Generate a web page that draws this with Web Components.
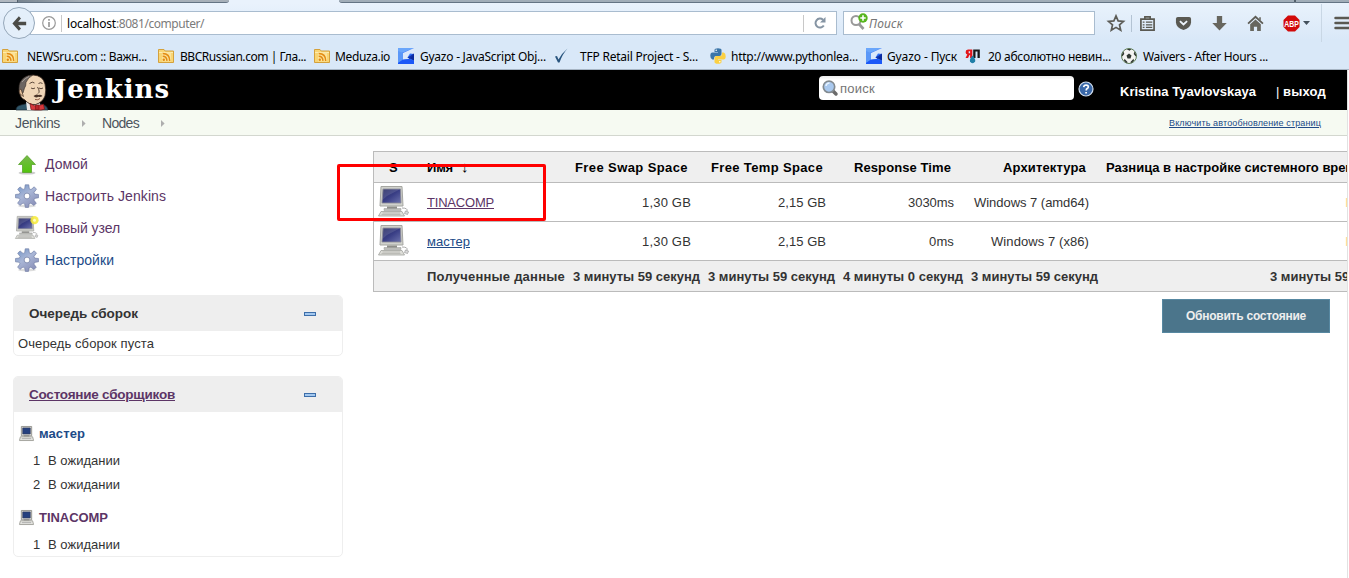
<!DOCTYPE html>
<html lang="ru">
<head>
<meta charset="utf-8">
<title>Nodes [Jenkins]</title>
<style>
html,body{margin:0;height:100%;overflow:hidden;background:#fff}
body{font-family:"Liberation Sans",Arial,sans-serif;font-size:13px;color:#333}
</style>
</head>
<body>
<jenkins-screen></jenkins-screen>
<script>
const define = (name, css, html, ready) => {
  customElements.define(name, class extends HTMLElement {
    constructor() {
      super();
      const t = document.createElement('template');
      t.innerHTML = `<style>:host{display:block;box-sizing:border-box}*{box-sizing:border-box}${css}</style>${typeof html === 'function' ? '' : html}`;
      this.attachShadow({mode: 'open'}).appendChild(t.content.cloneNode(true));
    }
    connectedCallback() {
      if (typeof html === 'function' && !this.done) {
        this.done = true;
        this.shadowRoot.innerHTML += html(this);
      }
      if (ready) ready(this);
    }
  });
};

/* Text run tracked so that it takes exactly `w` pixels */
define('fit-text', ':host{display:inline-block;white-space:pre;vertical-align:baseline}', '<slot></slot>', el => {
  const w = parseFloat(el.getAttribute('w'));
  const n = el.textContent.length;
  el.style.letterSpacing = '0px';
  const own = el.getBoundingClientRect().width;
  const ls = (w - own) / Math.max(1, n);
  el.style.letterSpacing = ls.toFixed(4) + 'px';
});

const pc = `<linearGradient id="s" x1="0" y1="0" x2="1" y2="1"><stop offset="0" stop-color="#24285e"/><stop offset=".5" stop-color="#3a3f86"/><stop offset="1" stop-color="#6d73ad"/></linearGradient>
<path d="M3 .5h21l1 19.500H2z" fill="#d0d1cc" stroke="#a5a6a1"/><path d="M5 3h17.500l.5 14H4z" fill="url(#s)" stroke="#8b8c96" stroke-width=".8"/><path d="M5 3h17.500L9 10l-4.500 4z" fill="#fff" opacity=".12"/>
<path d="M9 20.500h10v3H9z" fill="#8e8f89"/><path d="M6 22.500h17v2H6z" fill="#bcbdb8" stroke="#999" stroke-width=".5"/>
<path d="M3 25.500h21l2.500 4.500H.5z" fill="#deded9" stroke="#a0a19c" stroke-width=".8"/><path d="M4.500 27h17.500M3.500 28.600h19" stroke="#aeafa9" stroke-width=".8"/><path d="M24 22q6 0 5 3" fill="none" stroke="#aaa"/><path d="M27.500 25l3 1-1 2.500-3-1z" fill="#ddd" stroke="#999" stroke-width=".7"/>`;
const icons = {
  back: ['0 0 18 16', '<path d="M9.500 1.500L3 8l6.500 6.500M4 8h13" fill="none" stroke="#4c4c47" stroke-width="3.600"/>'],
  info: ['0 0 16 16', '<circle cx="8" cy="8" r="6.300" fill="none" stroke="#999" stroke-width="1.200"/><path d="M8 7v5M8 4v1.700" stroke="#999" stroke-width="1.700"/>'],
  reload: ['0 0 14 14', '<path d="M10.800 9.500A4.500 4.500 0 1 1 10 3.700" fill="none" stroke="#8594a3" stroke-width="2"/><path d="M12.500 1v5.500H7z" fill="#8594a3"/>'],
  addsearch: ['0 0 20 18', '<circle cx="7" cy="7.500" r="4.500" fill="none" stroke="#999" stroke-width="2"/><path d="M10 11l4.500 5" stroke="#999" stroke-width="2.700"/><circle cx="14" cy="5" r="4.700" fill="#57b51d"/><path d="M14 2.300v5.400M11.300 5h5.400" stroke="#fff" stroke-width="1.600"/>'],
  star: ['0 0 16 16', '<path d="M8 1.700l1.900 4.400 4.800.4-3.600 3.200 1.100 4.700L8 11.900l-4.200 2.500 1.100-4.700L1.300 6.500l4.800-.4z" fill="none" stroke="#5c5c57" stroke-width="1.500"/>'],
  list: ['0 0 16 16', '<path d="M1.800 3.800h12.400v10.400H1.800z" fill="none" stroke="#5a5952" stroke-width="1.600"/><path d="M5.500 4V1.800h5V4" fill="none" stroke="#5a5952" stroke-width="1.500"/><path d="M3.500 6.800h1.700M6.500 6.800h6M3.500 9.200h1.700M6.500 9.200h6M3.500 11.600h1.700M6.500 11.600h6" stroke="#5a5952" stroke-width="1.200"/>'],
  pocket: ['0 0 18 16', '<path d="M1 3q0-2 2-2h12q2 0 2 2v4q-.5 6-8 8-7.500-2-8-8z" fill="#5a5952"/><path d="M5.200 5.500L9 9l3.800-3.500" fill="none" stroke="#edf4fb" stroke-width="2"/>'],
  down: ['0 0 16 16', '<path d="M5.500 1h5v6.500h4.300L8 14.700 1.200 7.500h4.300z" fill="#67665e"/>'],
  home: ['0 0 16 16', '<path d="M1 8.200L8 1.700l7 6.500" fill="none" stroke="#5d5c55" stroke-width="1.700"/><path d="M3 8.800l5-4.600 5 4.600V15H9.500v-4h-3v4H3zM11.500 2H13v3l-1.500-1z" fill="#67665e"/>'],
  abp: ['0 0 17 17', '<path d="M5 .5h7L16.500 5v7L12 16.500H5L.5 12V5z" fill="#d20a0a"/><text x="8.500" y="11.600" text-anchor="middle" textLength="14.500" lengthAdjust="spacingAndGlyphs" font-family="Liberation Sans" font-weight="bold" font-size="8.500" fill="#fff">ABP</text>'],
  menu: ['0 0 18 14', '<path d="M1.500 2h16M1.500 7h16M1.500 12h16" stroke="#5a5952" stroke-width="2.500" stroke-linecap="round"/>'],
  rss: ['0 0 16 16', '<path d="M.5 3V1.500h5.500l1.200 1.500h8.300v11.500H.5z" fill="#f9d573" stroke="#d4a13c"/><path d="M1 4.500h14" stroke="#fdebb0"/><rect x="4" y="4.500" width="9" height="9" fill="#fbe39a"/><circle cx="5.800" cy="11.800" r="1.200" fill="#e38b13"/><path d="M4.700 8.200q4 0 4.300 4.700M4.700 5.500q7 0 7 7.400" fill="none" stroke="#e38b13" stroke-width="1.500"/>'],
  gyazo: ['0 0 16 16', '<path d="M0 0h16v16H0z" fill="#2f6ff6"/><path d="M0 0h16L5 4.500 0 6z" fill="#6aa6fb"/><path d="M0 3l5 2v7l-5 3z" fill="#5a97f8"/><path d="M16 0v6l-4-.5-2.500 4L12 11l-7 1V5z" fill="#dbe8fa"/><path d="M16 5.500v7L11 10z" fill="#0b2a9e"/><path d="M0 15l5-3.500 6-.5 5 2v3H0z" fill="#1b58f8"/><path d="M9.500 9.500l6.500-4L12 11z" fill="#1234ae"/>'],
  check: ['0 0 16 16', '<path d="M2 8.500l2-.5 1.500 3.500Q9 5 14.500.5 9.500 6 6.500 14.500H5z" fill="#29557e"/>'],
  python: ['0 0 16 16', '<path d="M4.500 2q0-1.800 3.500-1.800T11.500 2v4q0 2-2 2H6Q4 8 4 10.500v1H2.300Q.3 11 .3 7.800T2.500 4.500H8V4H4.500z" fill="#3c76a9"/><path d="M11.500 14q0 1.800-3.500 1.800T4.500 14v-4q0-2 2-2H10q2 0 2-2.500v-1h1.700q2 .5 2 3.700t-2.200 3.300H8v.5h3.500z" fill="#fbd043"/><circle cx="6.200" cy="2.200" r=".8" fill="#fff"/><circle cx="9.800" cy="13.800" r=".8" fill="#fff"/>'],
  yap: ['0 0 16 16', '<path d="M7.300 1.500H3Q.6 1.700.6 4.200q0 1.800 1.700 2.300L.5 10H3l1.500-3h.6v3h2.200zM5.100 5.200H3.700V3.300h1.400z" fill="#e3161b" fill-rule="evenodd"/><path d="M8.200 1.500h6.600V10h-2.300V3.500h-2V10H8.200z" fill="#181818"/><path d="M7.500 7.500q3.500 3.800 2.600 6-1 1.700-2.600 1.700T5 13.500q-.8-2.200 2.500-6z" fill="#207fa8"/>'],
  ball: ['0 0 16 16', '<circle cx="8" cy="8" r="7.500" fill="#f4f4f2" stroke="#5e7d57"/><path d="M8 5.500l2.500 1.900-1 3h-3l-1-3zM5.500 1h5L8.500 2.800zM.7 7l1.800-3.500.8 2.500-2 2.500zM15.300 7l-1.800-3.500-.8 2.500 2 2.500zM3 12.800l.5-2L6.500 14l-.5 1.300zM13 12.800l-.5-2L9.500 14l.5 1.300z" fill="#303832"/>'],
  logo: ['0 0 34 36', '<path d="M1 36q0-4 5-5l8-2 12 1q6 1 7 6z" fill="#2f5568" stroke="#1a2833" stroke-width=".7"/><path d="M11 27l6 5 8-3v7H12z" fill="#e8e8e8"/><path d="M6 10Q9 1 18 1q10 .5 12 9 1.500 6 0 12-2.500 6.500-9.500 8.500Q14 31 10 26q-5-2-5.500-8z" fill="#f0d6b7" stroke="#3b2a20" stroke-width=".8"/><path d="M4.500 20Q2.500 10 7 5.500 11 1.200 17.500 1.300 13 3.500 11 8.500q0 4-1.500 5.500l-1.500 5z" fill="#6c6561" stroke="#312722" stroke-width=".6"/><path d="M7 8q3-4 7-5.500" fill="none" stroke="#a39c97" stroke-width="1"/><path d="M6 15q-3 1-1 5l3.500 2.500z" fill="#e4bf99" stroke="#4b3628" stroke-width=".7"/><path d="M14.500 9.500q3-2.500 5-.5M23.500 9.500q2-1.500 4 0M16 14q2 1.500 4 0M24 14q2 1.500 4 0M22.500 13q3 5 .5 6.500" fill="none" stroke="#4b382b" stroke-width=".9"/><path d="M18.500 22q3-2.500 5-1 2-1 4 1-2 1.500-4 .8-3 1.500-5-.8z" fill="#4a3428"/><path d="M20 25.500q3 1 5-1" fill="none" stroke="#753f2c" stroke-width=".8"/><path d="M15 29.500l5.500 2.700 8-2 1 5-3.500.8h-6l-4-.5z" fill="#d8383c" stroke="#711" stroke-width=".7"/><rect x="20.500" y="31" width="3.500" height="4.500" fill="#b9252a" stroke="#711" stroke-width=".6"/>'],
  glass: ['0 0 16 16', '<path d="M10.500 10.500l3.500 3.500" stroke="#6b6b6b" stroke-width="3.500" stroke-linecap="round"/><circle cx="7" cy="6.800" r="5.700" fill="#a9c9ef" stroke="#838b91" stroke-width="1.700"/><path d="M4 6q.5-3 3.500-3" fill="none" stroke="#e8f3ff" stroke-width="1.500"/>'],
  help: ['0 0 16 16', '<circle cx="8" cy="8" r="7" fill="#3a68a8" stroke="#d2deed" stroke-width="1.200"/><path d="M5.700 6.200q.2-2.200 2.400-2.200 2.200.1 2.200 1.900 0 1-1.100 1.700-1 .6-1 1.900M8.100 11v1.500" fill="none" stroke="#fff" stroke-width="1.700"/>'],
  up: ['0 0 24 24', '<linearGradient id="g" x2="0" y2="1"><stop offset="0" stop-color="#78b84c"/><stop offset="1" stop-color="#52c50d"/></linearGradient><ellipse cx="12" cy="21" rx="8.500" ry="1.600" fill="#ccc"/><path d="M12 3.500l8.500 9h-4v8h-9v-8h-4z" fill="url(#g)" stroke="#4f9c1f" stroke-width=".7"/>'],
  gear: ['0 0 24 24', '<linearGradient id="q" x2=".7" y2="1"><stop offset="0" stop-color="#6f93c6"/><stop offset=".5" stop-color="#a9b6d6"/><stop offset="1" stop-color="#8a90b8"/></linearGradient><ellipse cx="12" cy="22" rx="9" ry="1.500" fill="#ddd"/><path d="M10.200.8h3.600l.5 4 1.700.8 3.200-2.800 2.300 2.400-2.500 3.200.7 1.700 3.800.4v3.300l-3.900.6-.7 1.700 2.400 3.100-2.300 2.300-3.200-2.300-1.700.7-.6 3.500h-3.200l-.6-3.600-1.700-.7-3.100 2.300-2.300-2.300 2.400-3.200-.7-1.600-3.800-.5v-3.300l3.900-.5.7-1.600-2.400-3.100 2.300-2.400 3.100 2.500 1.600-.7z" fill="url(#q)" stroke="#69779f" stroke-width=".6"/><circle cx="12" cy="12" r="2.900" fill="#fff" stroke="#7280a6" stroke-width=".8"/>'],
  pc: ['0 0 32 32', pc],
  newpc: ['0 0 32 32', pc + '<circle cx="26" cy="5.500" r="5.500" fill="#f6ea36" opacity=".85"/><circle cx="26" cy="5.500" r="2" fill="#fffcc0"/>'],
  minipc: ['0 0 16 16', '<path d="M2.500.5h11v10h-11z" fill="#ddddd8" stroke="#93938e"/><path d="M4 2h8v6.500H4z" fill="#25407f" stroke="#333b5c" stroke-width=".7"/><path d="M5 10h6v1.500H5z" fill="#777"/><path d="M1.500 11.500h13l1 4H.5z" fill="#e7e7e3" stroke="#a1a19b"/><path d="M3 13.500h10" stroke="#aaa"/>'],
  caret: ['0 0 8 5', '<path d="M0 0h8L4 5z" fill="#44505c"/>'],
  crumb: ['0 0 5 8', '<path d="M0 0l4.500 4L0 8z" fill="#aeaeae"/>']
};
define('ui-icon', ':host{display:block;flex:none}svg{display:block;width:100%;height:100%;overflow:visible}', el => {
  const [box, body] = icons[el.getAttribute('name')];
  el.style.width = el.getAttribute('w') + 'px';
  el.style.height = (el.getAttribute('h') || el.getAttribute('w')) + 'px';
  return `<svg viewBox="${box}" preserveAspectRatio="none">${body}</svg>`;
});

define('book-mark', ':host{display:flex;align-items:center;white-space:nowrap;color:#000}', el =>
  `<ui-icon name="${el.getAttribute('icon')}" w="16" style="margin-right:${el.getAttribute('gap')}px"></ui-icon><fit-text w="${el.getAttribute('w')}">${el.getAttribute('label')}</fit-text>`);

define('browser-chrome', `
:host{height:70px;background:linear-gradient(#e9f2fc 3px,#d9e8f8 40px,#d9e8f8);border-bottom:1px solid #a6b4c3;font-family:"Noto Sans","Open Sans",sans-serif;font-size:12px}
.tabs{height:3px;display:grid;grid-template-columns:18px 211px 110px 957px 1fr}
.tabs i{background:#a1adb8;border-bottom:1px solid #647484}
.tabs i:nth-child(1){background:#b1b8c0;border-right:1px solid #53606c}
.tabs i:nth-child(2){background:linear-gradient(90deg,#76838f,#a7b0b9 30%,#a7b0b9);border-bottom-right-radius:4px}
.tabs i:nth-child(3){background:#e9f2fc;border:0}
.tabs i:nth-child(4){border-bottom-left-radius:4px;border-right:2px solid #53606c}
.nav{height:40px;display:flex;align-items:center;padding-left:3px}
.back{width:32px;height:32px;border-radius:50%;border:1px solid #95a7b9;background:#e4effa;display:grid;place-items:center;z-index:1;flex:none}
.url{height:24px;width:807px;margin-left:-5px;border:1px solid #a9bccf;background:#fff;display:flex;align-items:center;flex:none;padding-left:10px}
.sep{width:1px;height:17px;background:#c8c8c8;flex:none}
.find{height:24px;width:252px;margin-left:6px;border:1px solid #a9bccf;background:#fff;display:flex;align-items:center;flex:none;padding-left:5px;color:#757575;font-style:italic}
.tools{display:flex;align-items:center;flex:none}
.marks{height:26px;display:grid;grid-template-columns:156px 156px 84px 155px 157px 156px 99px 156px 148px;padding-left:2px}`, `
<div class="tabs"><i></i><i></i><i></i><i></i><i></i></div>
<div class="nav">
 <div class="back"><ui-icon name="back" w="15" h="15"></ui-icon></div>
 <div class="url"><ui-icon name="info" w="16"></ui-icon><span class="sep" style="margin:0 5px 0 4px"></span>
  <span style="white-space:nowrap;color:#7b7b7b"><fit-text w="49" style="color:#000">localhost</fit-text><fit-text w="88">:8081/computer/</fit-text></span>
  <span class="sep" style="margin-left:auto"></span><ui-icon name="reload" w="14" style="margin:0 9px"></ui-icon></div>
 <div class="find"><ui-icon name="addsearch" w="20" h="18" style="margin-top:-3px"></ui-icon><fit-text w="34">Поиск</fit-text></div>
 <div class="tools">
  <ui-icon name="star" w="18" style="margin-left:12px"></ui-icon><span class="sep" style="margin:0 6px;background:#b3c3d3"></span>
  <ui-icon name="list" w="17" style="margin-left:1px"></ui-icon><ui-icon name="pocket" w="17" h="15" style="margin-left:19px"></ui-icon>
  <ui-icon name="down" w="17" style="margin-left:19px"></ui-icon><ui-icon name="home" w="17" style="margin-left:19px"></ui-icon>
  <ui-icon name="abp" w="17" style="margin-left:19px"></ui-icon><ui-icon name="caret" w="7" h="4" style="margin-left:3px"></ui-icon>
  <span class="sep" style="height:38px;margin-left:11px;background:#c9d7e5"></span><ui-icon name="menu" w="18" h="14" style="margin-left:12px"></ui-icon>
 </div>
</div>
<div class="marks">
<book-mark icon="rss" gap="9" w="120" label="NEWSru.com :: Важн..."></book-mark>
<book-mark icon="rss" gap="6" w="126" label="BBCRussian.com | Гла..."></book-mark>
<book-mark icon="rss" gap="5" w="55" label="Meduza.io"></book-mark>
<book-mark icon="gyazo" gap="6" w="126" label="Gyazo - JavaScript Obj..."></book-mark>
<book-mark icon="check" gap="11" w="118" label="TFP Retail Project - S..."></book-mark>
<book-mark icon="python" gap="5" w="127" label="http://www.pythonlea..."></book-mark>
<book-mark icon="gyazo" gap="5" w="70" label="Gyazo - Пуск"></book-mark>
<book-mark icon="yap" gap="7" w="123" label="20 абсолютно невин..."></book-mark>
<book-mark icon="ball" gap="6" w="125" label="Waivers - After Hours ..."></book-mark>
</div>`);

define('jenkins-header', `
:host{height:40px;background:#000;color:#fff;display:flex;align-items:flex-start;padding-left:15px}
.name{font:bold 26px/32px "DejaVu Serif",serif;margin:3px 0 0 5px;color:#fff}
.box{width:255px;height:24px;margin:6px 0 0 auto;background:linear-gradient(#ececec,#fff 4px);border-radius:4px;display:flex;align-items:center;padding-left:3px;color:#757575;font-size:13px}
.who{font-weight:bold;line-height:16px;margin:14px 0 0 26px}
.out{line-height:16px;font-weight:bold;margin:14px 21px 0 20px;white-space:nowrap}`, `
<ui-icon name="logo" w="34" h="36" style="margin-top:4px"></ui-icon><fit-text class="name" w="116">Jenkins</fit-text>
<div class="box"><ui-icon name="glass" w="16"></ui-icon><fit-text w="35" style="margin-left:2px">поиск</fit-text></div>
<ui-icon name="help" w="16" style="margin:11px 0 0 4px"></ui-icon>
<fit-text class="who" w="136">Kristina Tyavlovskaya</fit-text>
<span class="out"><fit-text w="7" style="font-weight:normal">| </fit-text><fit-text w="43">выход</fit-text></span>`);

define('bread-crumbs', `
:host{height:26px;background:#f6faf2;border-bottom:1px solid #d3d7cf;display:flex;align-items:center;padding:1px 26px 0 15px;font-size:14px;color:#4d545d}
.auto{margin-left:auto;font-size:9px;color:#204a87;text-decoration:underline}`, `
<fit-text w="45">Jenkins</fit-text><ui-icon name="crumb" w="4" h="7" style="margin:0 16px 0 22px"></ui-icon>
<fit-text w="37">Nodes</fit-text><ui-icon name="crumb" w="4" h="7" style="margin-left:22px"></ui-icon>
<fit-text class="auto" w="152">Включить автообновление страниц</fit-text>`);

define('task-link', `:host{height:32px;display:flex;align-items:center;font-size:14px;color:#5c3566}`, el =>
 `<ui-icon name="${el.getAttribute('icon')}" w="24"></ui-icon><fit-text w="${el.getAttribute('w')}" style="margin-left:6px">${el.getAttribute('label')}</fit-text>`);

define('side-panel', `
:host{width:330px;border:1px solid #eee;border-radius:5px;overflow:hidden;flex:none}
header{height:35px;background:#eee;display:flex;align-items:center;padding:0 26px 0 15px;font-weight:bold;font-size:13.500px}
i{width:12px;height:4px;border:1px solid #3d6ea9;background:#a3c8ef;margin:1px 0 0 auto}`,
`<header><slot name="title"></slot><i></i></header><slot></slot>`);

define('executor-node', `
:host{font-size:13px}
.n{display:flex;align-items:center;height:24px;padding-left:5px;font-weight:bold}
.e{display:flex;height:24px;align-items:center;padding-left:19px;gap:7px}`, el =>
`<div class="n"><ui-icon name="minipc" w="15"></ui-icon><fit-text w="${el.getAttribute('w')}" style="margin-left:5px;color:${el.getAttribute('color')}">${el.getAttribute('label')}</fit-text></div><div style="height:3px"></div>` +
Array.from({length: +el.getAttribute('count')}, (_, i) => `<div class="e"><fit-text w="8">${i + 1}</fit-text><fit-text w="72">В ожидании</fit-text></div>`).join(''));

define('side-bar', `
:host{width:373px;flex:none;padding:12px 0 0 13px}
nav{padding-left:2px;height:147px}
.empty{height:24px;display:flex;align-items:center;padding-left:4px}`, `
<nav><task-link icon="up" w="43" label="Домой"></task-link><task-link icon="gear" w="121" label="Настроить Jenkins"></task-link>
<task-link icon="newpc" w="75" label="Новый узел"></task-link><task-link icon="gear" w="69" label="Настройки" style="color:#204a87"></task-link></nav>
<side-panel style="height:61px"><fit-text slot="title" w="109">Очередь сборок</fit-text><div class="empty"><fit-text w="136">Очередь сборок пуста</fit-text></div></side-panel>
<side-panel style="height:181px;margin-top:20px"><fit-text slot="title" w="146" style="color:#5c3566;text-decoration:underline">Состояние сборщиков</fit-text>
<executor-node label="мастер" w="46" color="#204a87" count="2" style="margin-top:9px"></executor-node>
<executor-node label="TINACOMP" w="69" color="#5c3566" count="1" style="margin-top:9px"></executor-node></side-panel>`);

define('node-table', `
:host{border:1px solid #bbb;border-right:0;width:1029px}
.r{display:grid;grid-template-columns:49px 146px 135px 135px 128px 135px 299px;height:39px;border-top:1px solid #bbb;align-items:center}
.r>*{justify-self:end;margin-right:13px}
.r>.i{justify-self:start;margin:-1px 0 0 4px}.r>.l{justify-self:start;margin:0 0 0 4px}
.h{border:0;height:30px;background:#efefef;color:#000;font-weight:bold}.h>*{margin-right:16px}
.f{height:31px;background:#efefef;font-weight:bold}.f>*{margin-right:4px}
.link{text-decoration:underline}.s{color:#ffd890}`, `
<div class="r h"><fit-text class="i" w="9" style="margin:0 0 0 15px">S</fit-text><span class="l"><fit-text w="26">Имя</fit-text><fit-text w="6" style="margin-left:8px;font-weight:normal;font-size:15px;line-height:14px">↓</fit-text></span><fit-text w="113">Free Swap Space</fit-text><fit-text w="112">Free Temp Space</fit-text><fit-text w="97">Response Time</fit-text><fit-text w="83">Архитектура</fit-text><fit-text class="l" w="272">Разница в настройке системного времени</fit-text></div>
<div class="r"><ui-icon class="i" name="pc" w="32"></ui-icon><fit-text class="l link" w="67" style="color:#5c3566">TINACOMP</fit-text><fit-text w="49">1,30 GB</fit-text><fit-text w="48">2,15 GB</fit-text><fit-text w="46">3030ms</fit-text><fit-text w="115">Windows 7 (amd64)</fit-text><fit-text class="s" w="43">In sync</fit-text></div>
<div class="r"><ui-icon class="i" name="pc" w="32"></ui-icon><fit-text class="l link" w="43" style="color:#204a87">мастер</fit-text><fit-text w="49">1,30 GB</fit-text><fit-text w="48">2,15 GB</fit-text><fit-text w="25">0ms</fit-text><fit-text w="98">Windows 7 (x86)</fit-text><fit-text class="s" w="43">In sync</fit-text></div>
<div class="r f"><span></span><fit-text class="l" w="138">Полученные данные</fit-text><fit-text w="127">3 минуты 59 секунд</fit-text><fit-text w="127">3 минуты 59 секунд</fit-text><fit-text w="120">4 минуты 0 секунд</fit-text><fit-text w="127">3 минуты 59 секунд</fit-text><fit-text w="127">3 минуты 59 секунд</fit-text></div>`);

define('refresh-button', `:host{width:168px;height:34px;background:#4b758b;border:1px solid #5788a1;color:#eee;font-weight:bold;font-size:12px;display:grid;place-items:center}`, '<fit-text w="120">Обновить состояние</fit-text>');

define('jenkins-screen', `
:host{width:1349px;height:578px;overflow:hidden;position:relative;background:#fff}
.page{width:1348px;border-right:1px solid #e2e2e2;height:508px;overflow:hidden;background:#fff}
.body{display:flex;height:442px}
main{flex:1;min-width:0;overflow:hidden;padding-top:15px}
refresh-button{margin:7px 17px 0 auto}
.mark{position:absolute;left:337px;top:164px;width:209px;height:57px;border:3px solid #f00;border-radius:2px}`, `
<browser-chrome></browser-chrome>
<div class="page"><jenkins-header></jenkins-header><bread-crumbs></bread-crumbs>
<div class="body"><side-bar></side-bar><main><node-table></node-table><refresh-button></refresh-button></main></div></div>
<div class="mark"></div>`);
</script>
</body>
</html>
